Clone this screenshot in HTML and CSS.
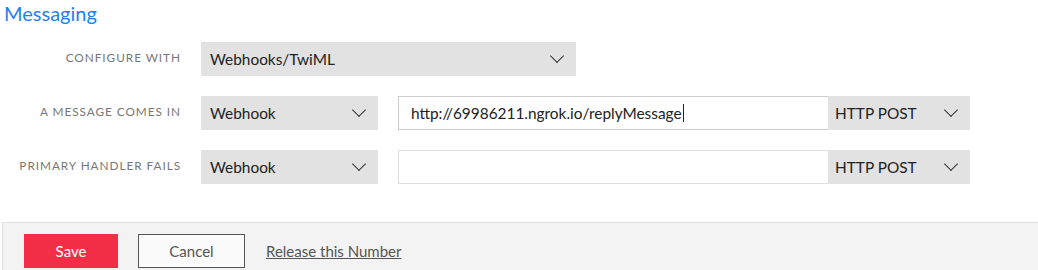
FILE: index.html
```html
<!DOCTYPE html>
<html lang="en">
<head>
    <meta charset="UTF-8">
    <title>Messaging</title>
    <link rel="stylesheet" href="styles.css">
</head>
<body>

<h2 class="title">Messaging</h2>

<div class="form">
    <div class="row">
        <label class="label">Configure with</label>
        <div class="select wide">Webhooks/TwiML <span class="chev"></span></div>
    </div>
    <div class="row">
        <label class="label">A message comes in</label>
        <div class="select">Webhook <span class="chev"></span></div>
        <div class="url">
            <div class="input">http://69986211.ngrok.io/replyMessage<span class="caret"></span></div>
            <div class="select method">HTTP POST <span class="chev"></span></div>
        </div>
    </div>
    <div class="row">
        <label class="label">Primary handler fails</label>
        <div class="select">Webhook <span class="chev"></span></div>
        <div class="url">
            <div class="input empty"></div>
            <div class="select method">HTTP POST <span class="chev"></span></div>
        </div>
    </div>
</div>

<div class="footer">
    <button class="btn save">Save</button>
    <button class="btn cancel">Cancel</button>
    <a class="release" href="#">Release this Number</a>
</div>

</body>
</html>
```

FILE: styles.css
```css
body {
    margin: 0;
    font-family: Lato, "Open Sans", sans-serif;
    color: #222;
    background: #fff;
}

.title {
    margin: 0;
    padding: 1px 0 0 4px;
    font-size: 20px;
    font-weight: normal;
    color: #1f7ff0;
    line-height: 24px;
}

.form {
    padding-top: 17px;
    display: flex;
    flex-direction: column;
    gap: 20px;
}

.row {
    display: flex;
    align-items: center;
    height: 34px;
}

.label {
    width: 181px;
    text-align: right;
    text-transform: uppercase;
    font-size: 11.8px;
    letter-spacing: 0.95px;
    color: #777;
    margin-right: 20px;
    margin-top: -4px;
}

.select {
    display: flex;
    align-items: center;
    justify-content: space-between;
    box-sizing: border-box;
    width: 177px;
    height: 34px;
    padding: 0 11px 0 9px;
    background: #e2e2e2;
    font-size: 15.4px;
}

.select.wide {
    width: 375px;
}

.chev {
    width: 9px;
    height: 9px;
    border-right: 1.3px solid #333;
    border-bottom: 1.3px solid #333;
    transform: rotate(45deg);
    margin: -6px 3px 0 0;
}

.url {
    display: flex;
    margin-left: 20px;
}

.input {
    box-sizing: border-box;
    width: 430px;
    height: 34px;
    border: 1px solid #ccc;
    border-right: none;
    padding: 0 12px;
    display: flex;
    align-items: center;
    font-size: 15.4px;
}

.input.empty {
    border-color: #ddd;
}

.caret {
    display: inline-block;
    width: 1px;
    height: 18px;
    background: #222;
    margin-left: 1px;
}

.select.method {
    width: 142px;
    padding-left: 7px;
}

.footer {
    margin: 38px 0 0 2px;
    border-top: 1px solid #e0e0e0;
    border-left: 1px solid #e0e0e0;
    background: #f3f3f3;
    padding: 11px 0 10px 21px;
    display: flex;
    align-items: center;
}

.btn {
    height: 34px;
    font-family: inherit;
    font-size: 15px;
    cursor: pointer;
}

.save {
    width: 94px;
    background: #f22f46;
    color: #fff;
    border: none;
}

.cancel {
    width: 107px;
    margin-left: 20px;
    background: #fafafa;
    color: #555;
    border: 1px solid #555;
}

.release {
    margin-left: 21px;
    color: #555;
    font-size: 15px;
}
```
